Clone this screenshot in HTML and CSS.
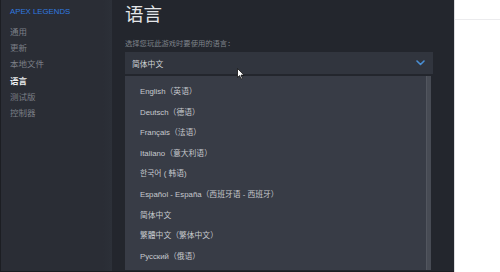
FILE: index.html
```html
<!DOCTYPE html>
<html lang="zh">
<head>
<meta charset="utf-8">
<title>语言</title>
<link rel="stylesheet" href="styles.css">
</head>
<body>
<div class="screen">
  <div class="window">
    <aside class="sidebar">
      <div class="game">APEX LEGENDS</div>
      <ul class="nav">
        <li>通用</li>
        <li>更新</li>
        <li>本地文件</li>
        <li class="active">语言</li>
        <li>测试版</li>
        <li>控制器</li>
      </ul>
    </aside>
    <main class="content">
      <h1 class="title">语言</h1>
      <p class="label">选择您玩此游戏时要使用的语言：</p>
      <div class="select">
        <span>简体中文</span>
        <svg class="chevron" width="9" height="6" viewBox="0 0 9 6"><path d="M1 1 L4.5 4.5 L8 1" fill="none" stroke="#4a8fd4" stroke-width="1.6" stroke-linecap="round" stroke-linejoin="round"/></svg>
      </div>
      <div class="dropdown">
        <ul class="options">
          <li>English（英语）</li>
          <li>Deutsch（德语）</li>
          <li>Français（法语）</li>
          <li>Italiano（意大利语）</li>
          <li>한국어 ( 韩语)</li>
          <li>Español - España（西班牙语 - 西班牙）</li>
          <li>简体中文</li>
          <li>繁體中文（繁体中文）</li>
          <li>Русский（俄语）</li>
        </ul>
        <div class="scrollbar"></div>
      </div>
      <svg class="cursor" width="8" height="12" viewBox="0 0 8 12"><path d="M0.5 0.5 L0.5 9.5 L2.6 7.6 L4.1 11 L5.4 10.4 L4 7.1 L7 7.1 Z" fill="#fff" stroke="#111" stroke-width="0.8" stroke-linejoin="round"/></svg>
    </main>
  </div>
  <div class="outside"><div class="rule"></div></div>
</div>
</body>
</html>
```
FILE: styles.css
```css
html, body {
  margin: 0;
  padding: 0;
  width: 500px;
  height: 272px;
  overflow: hidden;
  background: #ffffff;
}

.screen {
  display: flex;
  width: 500px;
  height: 272px;
  font-family: "Liberation Sans", "Noto Sans CJK SC", sans-serif;
}

.window {
  display: flex;
  width: 454px;
  height: 272px;
  background: #23262d;
  border-left: 1px solid #1c1e23;
  border-bottom: 1px solid #1b1d22;
  box-sizing: border-box;
}

.sidebar {
  width: 111px;
  flex: none;
  background: linear-gradient(to right, #2a2d35 0, #2a2d35 92%, #2c3038 100%);
  padding-top: 6px;
  box-sizing: border-box;
}

.game {
  padding-left: 9px;
  font-size: 7.8px;
  line-height: 12px;
  height: 12px;
  color: #2f7ae0;
  margin-bottom: 6px;
}

.nav {
  list-style: none;
  margin: 0;
  padding: 0 0 0 9px;
}

.nav li {
  font-size: 8.5px;
  line-height: 16.2px;
  height: 16.2px;
  color: #7b7f87;
}

.nav li.active {
  color: #eceef0;
  font-weight: bold;
}

.content {
  position: relative;
  flex: 1;
  padding: 4px 21px 0 13px;
  box-sizing: border-box;
  display: flex;
  flex-direction: column;
}

.title {
  margin: 0;
  font-size: 18.5px;
  line-height: 22px;
  font-weight: normal;
  color: #e4e6e9;
}

.label {
  margin: 13px 0 0;
  font-size: 7.3px;
  line-height: 10px;
  color: #7f838b;
}

.select {
  margin-top: 3px;
  height: 22px;
  background: #31353e;
  display: flex;
  align-items: center;
  justify-content: space-between;
  padding: 0 8px 0 7px;
  font-size: 7.8px;
  color: #cfd2d6;
}

.chevron {
  margin-top: -1px;
}

.dropdown {
  margin-top: 2px;
  margin-right: 2px;
  height: 194px;
  display: flex;
}

.options {
  flex: 1;
  list-style: none;
  margin: 0;
  padding: 6px 0 0 15px;
  background: #383c46;
}

.options li {
  height: 20.6px;
  line-height: 20.6px;
  font-size: 7.8px;
  color: #c6c9ce;
  white-space: nowrap;
}

.scrollbar {
  width: 5px;
  flex: none;
  background: #474b54;
  border-left: 1px solid #52565f;
  box-sizing: border-box;
}

.cursor {
  position: absolute;
  left: 125px;
  top: 68px;
}

.outside {
  flex: 1;
  background: #ffffff;
  border-left: 1px solid #dcdde0;
}

.rule {
  margin-top: 19px;
  height: 1px;
  background: #ececee;
}
```
